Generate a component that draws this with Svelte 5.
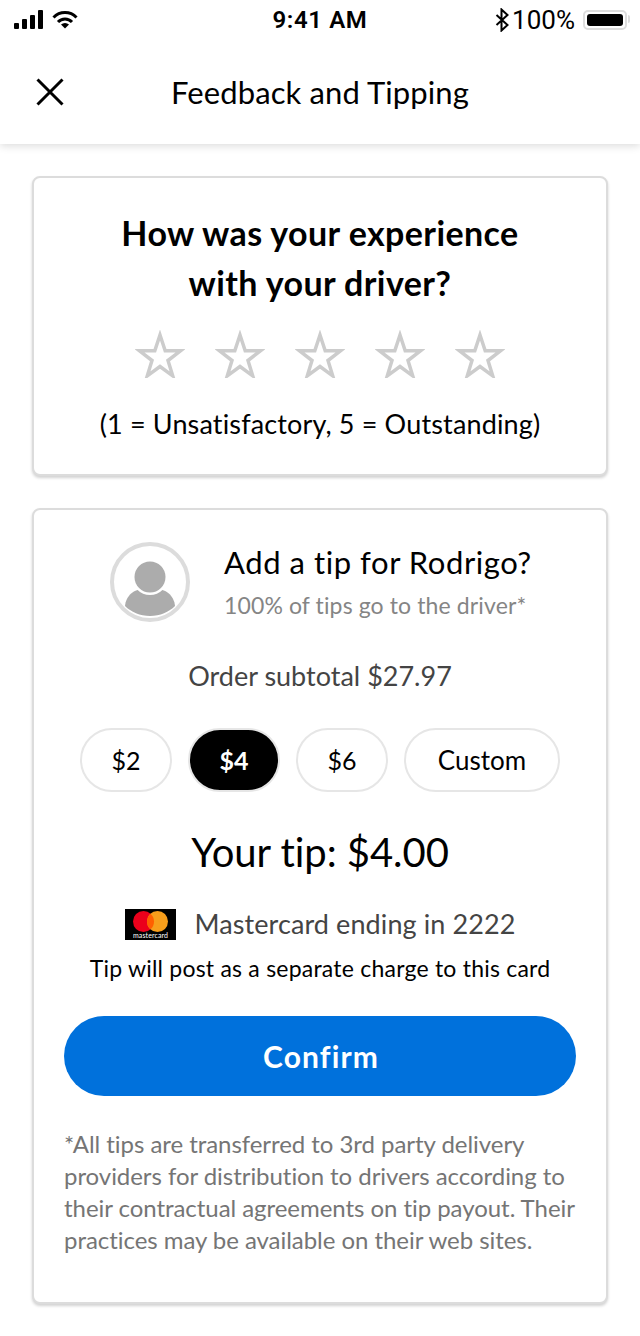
<script>
  const stars = [1, 2, 3, 4, 5];
  const lines = [
    '*All tips are transferred to 3rd party delivery',
    'providers for distribution to drivers according to',
    'their contractual agreements on tip payout. Their',
    'practices may be available on their web sites.'
  ];
</script>

<div class="page">
  <header class="top">
    <div class="status">
      <div class="left">
        <svg width="34" height="20" viewBox="0 0 34 20" class="signal"><rect x="0" y="14" width="5" height="6" rx="1"/><rect x="8" y="10" width="5" height="10" rx="1"/><rect x="16" y="6" width="5" height="14" rx="1"/><rect x="24" y="1" width="5" height="19" rx="1"/></svg>
        <svg width="26" height="20" viewBox="0 0 26 20" class="wifi"><path d="M1.500 8.500a16 16 0 0 1 23 0"/><path d="M6 13a9.500 9.500 0 0 1 14 0"/><path class="fill" d="M9 15.500a6 6 0 0 1 8 0L13 19.500z"/></svg>
      </div>
      <div class="time">9:41 AM</div>
      <div class="right">
        <svg width="14" height="24" viewBox="0 0 14 24" class="bt"><path d="M1.500 7l11 10-6 5.500V1.500l6 5.500-11 10"/></svg>
        <span class="pct">100%</span>
        <div class="battery"><div class="charge"></div></div>
      </div>
    </div>
    <div class="nav">
      <svg class="close" width="28" height="28" viewBox="0 0 28 28"><path d="M1.500 1.500l25 25M26.500 1.500l-25 25"/></svg>
      <h1>Feedback and Tipping</h1>
    </div>
  </header>

  <main>
    <section class="card rate">
      <h2>How was your experience<br />with your driver?</h2>
      <div class="stars">
        {#each stars as s (s)}
          <svg width="50" height="48" viewBox="0 0 50 48"><path d="M25 5l5.200 15.800h15.300l-12.500 9.700 4.700 15.300L25 36.500l-12.700 9.300 4.700-15.300-12.500-9.700h15.300z"/></svg>
        {/each}
      </div>
      <p class="scale">(1 = Unsatisfactory, 5 = Outstanding)</p>
    </section>

    <section class="card tip">
      <div class="driver">
        <svg width="80" height="80" viewBox="0 0 80 80" class="avatar">
          <circle cx="40" cy="40" r="38" class="ring"/>
          <path class="head" d="M15 64c1-10 8-18 25-18s24 8 25 18c-6 6-15 10-25 10s-19-4-25-10z"/>
          <circle cx="40" cy="35" r="18" class="gap"/>
          <circle cx="40" cy="35" r="15.500" class="head"/>
        </svg>
        <div class="who">
          <div class="add">Add a tip for Rodrigo?</div>
          <div class="go">100% of tips go to the driver*</div>
        </div>
      </div>

      <div class="subtotal">Order subtotal $27.97</div>

      <div class="amounts">
        <button class="amt w92">$2</button>
        <button class="amt w92 on">$4</button>
        <button class="amt w92">$6</button>
        <button class="amt custom">Custom</button>
      </div>

      <div class="your">Your tip: $4.00</div>

      <div class="cardline">
        <svg width="51" height="31" viewBox="0 0 51 31" class="mc">
          <rect width="51" height="31" fill="#000"/>
          <circle cx="18.500" cy="12.500" r="10.500" fill="#eb001b"/>
          <circle cx="32.500" cy="12.500" r="10.500" fill="#f79e1b"/>
          <path d="M25.500 4.670A10.500 10.500 0 0 1 25.500 20.330A10.500 10.500 0 0 1 25.500 4.670z" fill="#ff5f00"/>
          <text x="25.500" y="28.500" class="mctext">mastercard</text>
        </svg>
        <span>Mastercard ending in 2222</span>
      </div>
      <div class="post">Tip will post as a separate charge to this card</div>

      <button class="confirm">Confirm</button>

      <div class="fine">
        {#each lines as l}
          <div>{l}</div>
        {/each}
      </div>
    </section>
  </main>
</div>

<style>
  :global(body) { margin: 0; background: #fff; }
  .page { width: 640px; height: 1336px; overflow: hidden; font-family: Lato, "Noto Sans", sans-serif; font-variant-ligatures: none; color: #000; background: #fff; }
  .top { height: 144px; box-shadow: 0 2px 8px rgba(0, 0, 0, 0.14); background: #fff; }
  .status { height: 40px; display: flex; align-items: center; justify-content: space-between; position: relative; padding: 0 13px 0 14px; }
  .left { display: flex; align-items: center; margin-top: -2px; }
  .signal rect { fill: #000; }
  .wifi { margin-left: 4px; }
  .wifi path { fill: none; stroke: #000; stroke-width: 3; }
  .wifi path.fill { fill: #000; stroke: none; }
  .time { position: absolute; left: 0; right: 0; text-align: center; font: 600 24px/40px Roboto, sans-serif; letter-spacing: 0.6px; }
  .right { display: flex; align-items: center; }
  .bt { margin-right: 3px; }
  .bt path { fill: none; stroke: #000; stroke-width: 2; }
  .pct { font: 400 26px/40px Roboto, sans-serif; margin-right: 8px; }
  .battery { position: relative; width: 44px; height: 20px; border: 2px solid #ddd; border-radius: 5px; padding: 2px; box-sizing: border-box; display: flex; }
  .battery::after { content: ""; position: absolute; right: -5px; top: 3px; width: 2px; height: 8px; background: #ddd; border-radius: 0 2px 2px 0; }
  .charge { flex: 1; background: #000; border-radius: 3px; }
  .nav { height: 104px; position: relative; display: flex; align-items: center; justify-content: center; }
  .close { position: absolute; left: 36px; top: 38px; }
  .close path { stroke: #000; stroke-width: 3; fill: none; }
  h1 { margin: 0; font-weight: 400; font-size: 31px; letter-spacing: 0.1px; line-height: 40px; margin-top: -1px; }
  main { padding: 32px 32px 0; display: flex; flex-direction: column; gap: 32px; }
  .card { box-sizing: border-box; border: 2px solid #dcdcdc; border-radius: 8px; background: #fff; box-shadow: 0 2px 3px rgba(0, 0, 0, 0.18); text-align: center; }
  .rate { height: 300px; padding-top: 30px; }
  h2 { margin: 0; font-weight: 700; font-size: 34px; line-height: 50px; letter-spacing: 0.4px; }
  .stars { display: flex; justify-content: center; gap: 30px; margin-top: 22px; }
  .stars svg path { fill: none; stroke: #ccc; stroke-width: 3.500; }
  .scale { margin: 26px 0 0; font-size: 27px; line-height: 40px; letter-spacing: 0.15px; }
  .tip { height: 796px; padding: 0 30px; }
  .driver { display: flex; align-items: flex-start; margin: 32px 0 0 46px; text-align: left; }
  .avatar .ring { fill: #fff; stroke: #dcdcdc; stroke-width: 4; }
  .avatar .head { fill: #acacac; }
  .avatar .gap { fill: #fff; }
  .who { margin-left: 34px; }
  .add { font-size: 31px; line-height: 40px; letter-spacing: 0.56px; }
  .go { font-size: 23px; line-height: 30px; color: #858585; letter-spacing: 0.12px; margin-top: 8px; }
  .subtotal { margin-top: 34px; font-size: 27px; line-height: 40px; color: #444; }
  .amounts { display: flex; justify-content: center; gap: 16px; margin-top: 32px; }
  .amt { height: 64px; border: 2px solid #e6e6e6; border-radius: 32px; background: #fff; color: #000; font: 400 26px Lato, sans-serif; padding: 0; }
  .w92 { width: 92px; font-size: 25px; }
  .custom { width: 156px; }
  .amt.on { background: #000; color: #fff; font-weight: 700; }
  .your { font-size: 40px; line-height: 50px; margin-top: 35px; letter-spacing: -0.05px; }
  .cardline { display: flex; align-items: center; justify-content: center; gap: 18px; margin-top: 29px; padding-left: 1px; color: #444; font-size: 27px; line-height: 36px; letter-spacing: 0.1px; }
  .mctext { fill: #fff; font-size: 7px; text-anchor: middle; font-family: Lato, sans-serif; font-weight: 400; }
  .post { font-size: 23px; line-height: 32px; margin-top: 10px; letter-spacing: 0.22px; }
  .confirm { display: block; width: 512px; height: 80px; margin: 32px 0 0; padding: 0 0 0 2px; border: 0; border-radius: 40px; background: #0071dc; color: #fff; font: 700 30px Lato, sans-serif; letter-spacing: 1.1px; }
  .fine { margin-top: 32px; text-align: left; font-size: 24px; line-height: 32px; color: #757575; white-space: nowrap; letter-spacing: -0.05px; }
</style>
